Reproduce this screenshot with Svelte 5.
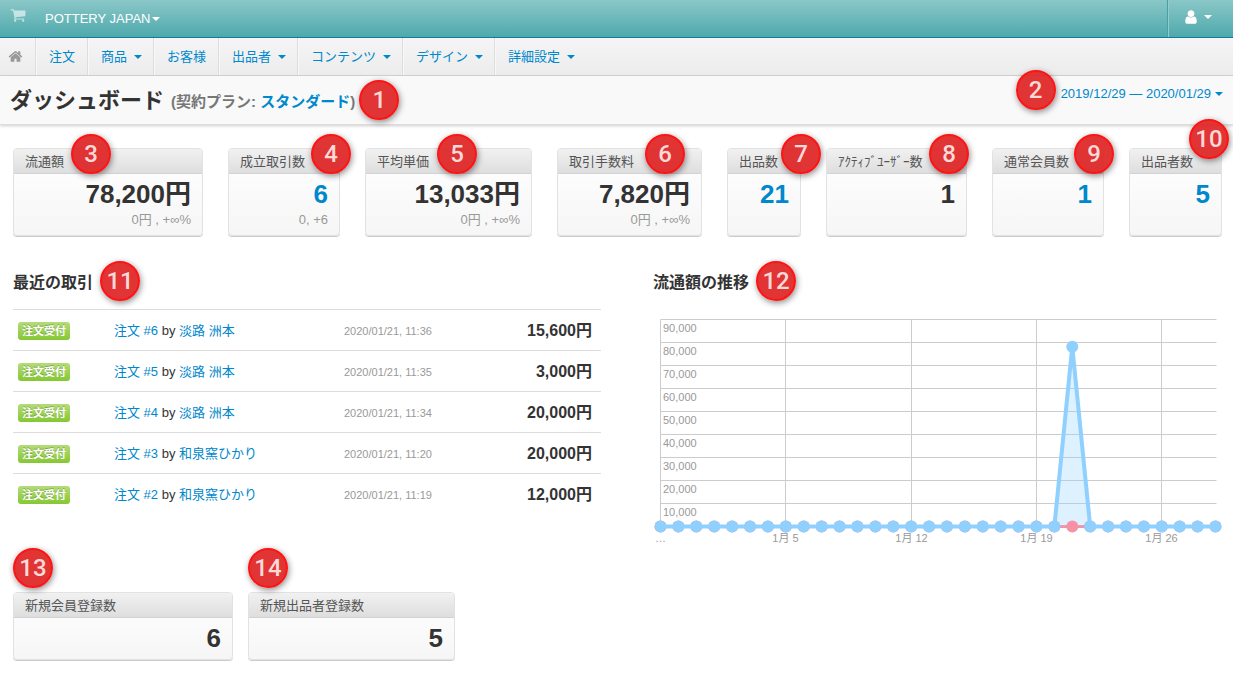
<script>
  const menu = [
    { label: '注文' },
    { label: '商品', caret: true },
    { label: 'お客様' },
    { label: '出品者', caret: true },
    { label: 'コンテンツ', caret: true },
    { label: 'デザイン', caret: true },
    { label: '詳細設定', caret: true }
  ];

  // x is the marker offset from the left edge of the card
  const stats = [
    { label: '流通額', value: '78,200円', sub: '0円 , +∞%', marker: 3, x: 57 },
    { label: '成立取引数', value: '6', sub: '0, +6', link: true, marker: 4, x: 82 },
    { label: '平均単価', value: '13,033円', sub: '0円 , +∞%', marker: 5, x: 71 },
    { label: '取引手数料', value: '7,820円', sub: '0円 , +∞%', marker: 6, x: 87 },
    { label: '出品数', value: '21', link: true, marker: 7, x: 53 },
    { label: 'ｱｸﾃｨﾌﾞﾕｰｻﾞｰ数', value: '1', marker: 8, x: 102 },
    { label: '通常会員数', value: '1', link: true, marker: 9, x: 81 },
    { label: '出品者数', value: '5', link: true, marker: 10, x: 59, raised: true }
  ];

  const signups = [
    { label: '新規会員登録数', value: '6', marker: 13 },
    { label: '新規出品者登録数', value: '5', marker: 14 }
  ];

  const orders = [
    { id: 6, customer: '淡路 洲本', date: '2020/01/21, 11:36', total: '15,600円' },
    { id: 5, customer: '淡路 洲本', date: '2020/01/21, 11:35', total: '3,000円' },
    { id: 4, customer: '淡路 洲本', date: '2020/01/21, 11:34', total: '20,000円' },
    { id: 3, customer: '和泉窯ひかり', date: '2020/01/21, 11:20', total: '20,000円' },
    { id: 2, customer: '和泉窯ひかり', date: '2020/01/21, 11:19', total: '12,000円' }
  ];

  // Chart geometry
  const left = 7.5;
  const right = 562.5;
  const top = 9.5;
  const bottom = 216.5;
  const days = 32;
  const peakDay = 23;

  const sales = Array.from({ length: days }, (_, i) => (i === peakDay ? 78200 : 0));
  const points = sales.map((amount, i) => ({
    x: left + ((right - left) * i) / (days - 1),
    y: bottom - ((bottom - top) * amount) / 90000
  }));
  const line = points.map((p) => `${p.x},${p.y}`).join(' ');

  const yTicks = [90, 80, 70, 60, 50, 40, 30, 20, 10].map((n, i) => ({
    label: `${n},000`,
    y: top + i * 23
  }));
  const xTicks = [
    { day: 0, label: '…' },
    { day: 7, label: '1月 5' },
    { day: 14, label: '1月 12' },
    { day: 21, label: '1月 19' },
    { day: 28, label: '1月 26' }
  ].map((t) => ({ ...t, x: Math.floor(points[t.day].x) + 0.5 }));
</script>

{#snippet card(stat)}
  <h3>{stat.label}</h3>
  <div class="card-body">
    {#if stat.link}
      <a class="value" href="#detail">{stat.value}</a>
    {:else}
      <span class="value">{stat.value}</span>
    {/if}
    {#if stat.sub}
      <span class="sub">{stat.sub}</span>
    {/if}
  </div>
{/snippet}

<header class="topbar">
  <a class="cart" href="#store" aria-label="ストア">
    <svg viewBox="0 0 1792 1792" width="16" height="16"><path d="M704 1536q0 52-38 90t-90 38-90-38-38-90 38-90 90-38 90 38 38 90zm896 0q0 52-38 90t-90 38-90-38-38-90 38-90 90-38 90 38 38 90zm128-1088v512q0 24-16.5 42.5t-40.5 21.5l-1044 122q13 60 13 70 0 16-24 64h920q26 0 45 19t19 45-19 45-45 19h-1024q-26 0-45-19t-19-45q0-11 8-31.5t16-36 21.5-40 15.5-29.5l-177-823h-204q-26 0-45-19t-19-45 19-45 45-19h256q16 0 28.5 6.5t19.5 15.5 13 24.5 8 26 5.5 29.5 4.5 26h1201q26 0 45 19t19 45z" /></svg>
  </a>
  <button class="store">POTTERY JAPAN<span class="caret"></span></button>
  <button class="account" aria-label="アカウント">
    <svg viewBox="0 0 1792 1792" width="16" height="16"><path d="M1536 1399q0 109-62.5 187t-150.5 78h-854q-88 0-150.5-78t-62.5-187q0-85 8.5-160.5t31.5-152 58.5-131 94-89 134.5-34.5q131 128 313 128t313-128q76 0 134.5 34.5t94 89 58.5 131 31.5 152 8.5 160.5zm-256-887q0 159-112.5 271.5t-271.5 112.5-271.5-112.5-112.5-271.5 112.5-271.5 271.5-112.5 271.5 112.5 112.5 271.5z" /></svg>
    <span class="caret"></span>
  </button>
</header>

<nav class="menu">
  <a class="home" href="#home" aria-label="ホーム">
    <svg viewBox="0 0 1792 1792" width="15" height="15"><path d="M1472 992v480q0 26-19 45t-45 19h-384v-384h-256v384h-384q-26 0-45-19t-19-45v-480q0-1 .5-3t.5-3l575-474 575 474q1 2 1 6zm223-69l-62 74q-8 9-21 11h-3q-13 0-21-7l-692-577-692 577q-12 8-24 7-13-2-21-11l-62-74q-8-10-7-23.5t11-21.5l719-599q32-26 76-26t76 26l244 204v-195q0-14 9-23t23-9h192q14 0 23 9t9 23v408l219 182q10 8 11 21.5t-7 23.5z" /></svg>
  </a>
  {#each menu as item}
    <a class:dropdown={item.caret} href="#menu">{item.label}{#if item.caret}<span class="caret"></span>{/if}</a>
  {/each}
</nav>

<div class="titlebar">
  <h1>ダッシュボード</h1>
  <p class="plan">(契約プラン: <a href="#plan">スタンダード</a>)</p>
  <span class="marker">1</span>
  <div class="period">
    <span class="marker">2</span>
    <button class="range">2019/12/29 — 2020/01/29<span class="caret"></span></button>
  </div>
</div>

<main>
  <section class="stats">
    {#each stats as stat}
      <article class="card">
        {@render card(stat)}
        <span class="marker pinned" class:raised={stat.raised} style="left: {stat.x}px">{stat.marker}</span>
      </article>
    {/each}
  </section>

  <div class="columns">
    <section>
      <header class="section-head">
        <h2>最近の取引</h2>
        <span class="marker">11</span>
      </header>
      <table class="orders">
        <tbody>
          {#each orders as order}
            <tr>
              <td class="status"><span class="tag">注文受付</span></td>
              <td class="order"><a href="#order">注文 #{order.id}</a> by <a href="#customer">{order.customer}</a></td>
              <td class="date">{order.date}</td>
              <td class="total">{order.total}</td>
            </tr>
          {/each}
        </tbody>
      </table>
    </section>

    <section>
      <header class="section-head">
        <h2>流通額の推移</h2>
        <span class="marker">12</span>
      </header>
      <svg class="chart" viewBox="0 0 569 240" role="img" aria-label="流通額の推移">
        <g class="grid">
          {#each yTicks as tick}
            <line x1={left} y1={tick.y} x2={right + 1} y2={tick.y} />
          {/each}
          {#each xTicks as tick}
            <line x1={tick.x} y1={top} x2={tick.x} y2={bottom} />
          {/each}
        </g>
        <line class="previous" x1={left} y1={bottom} x2={right} y2={bottom} />
        <polygon class="area" points="{line} {right},{bottom} {left},{bottom}" />
        {#each points as p}
          <circle class="previous-dot" cx={p.x} cy={bottom} r="6" />
        {/each}
        <polyline class="current" points={line} />
        {#each points as p}
          <circle class="dot" cx={p.x} cy={p.y} r="6" />
        {/each}
        {#each yTicks as tick}
          <text x="10" y={tick.y + 12}>{tick.label}</text>
        {/each}
        {#each xTicks as tick}
          <text x={tick.x} y="232" text-anchor="middle">{tick.label}</text>
        {/each}
      </svg>
    </section>
  </div>

  <section class="signups">
    {#each signups as stat}
      <article class="card">
        {@render card(stat)}
        <span class="marker pinned above">{stat.marker}</span>
      </article>
    {/each}
  </section>
</main>

<style>
  :global(body) {
    background: #fff;
    color: #333;
    font-family: "Liberation Sans", "Noto Sans CJK JP", sans-serif;
    font-size: 13px;
    line-height: 20px;
  }

  h1,
  h2,
  h3,
  p {
    margin: 0;
  }

  a {
    color: #08c;
    text-decoration: none;
  }

  button {
    display: flex;
    align-items: center;
    padding: 0;
    border: 0;
    background: none;
    color: inherit;
    font: inherit;
    cursor: pointer;
  }

  svg {
    display: block;
    fill: currentColor;
  }

  .caret {
    display: inline-block;
    border-top: 4px solid currentColor;
    border-left: 4px solid transparent;
    border-right: 4px solid transparent;
  }

  /* Top bar */
  .topbar {
    display: flex;
    height: 37px;
    border-bottom: 1px solid #0a7c9e;
    background: linear-gradient(#8ac7c8, #4fa9ac);
    color: #fff;
    text-shadow: 0 -1px 0 rgba(0, 0, 0, 0.25);
  }

  .cart {
    padding: 7px 19px 0 10px;
    color: rgba(255, 255, 255, 0.6);
  }

  .store {
    gap: 2px;
  }

  .account {
    gap: 5px;
    margin-left: auto;
    padding: 0 21px 3px 15px;
    border-left: 1px solid #4a9fa5;
    box-shadow: inset 1px 0 0 #93cccf;
  }

  /* Navigation */
  .menu {
    display: flex;
    height: 37px;
    border-bottom: 1px solid #d6d6d6;
    background: linear-gradient(#f5f5f5, #ececec);
  }

  .menu a {
    display: flex;
    align-items: center;
    gap: 7px;
    padding: 0 12px;
    border-left: 1px solid #f8f8f8;
    border-right: 1px solid #ddd;
  }

  .menu .dropdown {
    padding-right: 11px;
  }

  .menu a:last-child {
    border-right: 0;
  }

  .menu .home {
    padding: 0 12px 0 8px;
    border-left: 0;
    color: #999;
  }

  /* Title */
  .titlebar {
    display: flex;
    align-items: center;
    height: 48px;
    padding: 0 10px;
    border-bottom: 1px solid #ddd;
    background: #f9f9f9;
    box-shadow: 0 1px 3px rgba(0, 0, 0, 0.2);
  }

  h1 {
    padding-top: 2px;
    font-size: 22px;
    line-height: 30px;
  }

  .plan {
    margin: 0 4px 0 7px;
    padding-top: 4px;
    color: #777;
    font-size: 15px;
    font-weight: bold;
  }

  .period {
    display: flex;
    align-items: center;
    gap: 5px;
    margin: 0 0 20px auto;
  }

  .range {
    gap: 4px;
    padding-top: 7px;
    color: #08c;
  }

  /* Numbered markers */
  .marker {
    box-sizing: border-box;
    width: 40px;
    height: 40px;
    border: 2px solid #fd1414;
    border-radius: 50%;
    background: rgba(222, 35, 35, 0.92);
    box-shadow: 1px 2px 6px rgba(0, 0, 0, 0.45);
    color: #fbd9d9;
    font-family: Roboto, "Liberation Sans", sans-serif;
    font-size: 24px;
    font-weight: 500;
    line-height: 36px;
    text-align: center;
  }

  .pinned {
    position: absolute;
    top: -15px;
  }

  .raised {
    top: -30px;
  }

  .above {
    top: -45px;
    left: -1px;
  }

  main {
    padding: 23px 11px 20px 13px;
  }

  /* Cards */
  .stats {
    display: grid;
    grid-template-columns: 190fr 112fr 167fr 145fr 74fr 141fr 112fr 93fr;
    gap: 25px;
  }

  .signups {
    display: grid;
    grid-template-columns: 220fr 207fr;
    gap: 15px;
    max-width: 442px;
    margin-top: 42px;
  }

  .card {
    position: relative;
    display: flex;
    flex-direction: column;
    min-width: 0;
    border: 1px solid #e2e2e2;
    border-radius: 4px;
    background: linear-gradient(#fff, #f6f6f6);
    box-shadow: 0 1px 0 #ccc;
  }

  .card h3 {
    padding: 3px 11px 1px;
    border-bottom: 1px solid #d2d2d2;
    border-radius: 3px 3px 0 0;
    background: linear-gradient(#f1f1f1, #dedede);
    color: #555;
    font-size: 13px;
    font-weight: normal;
    white-space: nowrap;
  }

  .card-body {
    display: flex;
    flex-direction: column;
    padding: 5px 11px;
    text-align: right;
  }

  .value {
    font-size: 26px;
    font-weight: bold;
    line-height: 31px;
    white-space: nowrap;
  }

  .sub {
    color: #999;
    white-space: nowrap;
  }

  /* Lower columns */
  .columns {
    display: grid;
    grid-template-columns: 588fr 569fr;
    gap: 52px;
    margin-top: 25px;
  }

  .section-head {
    display: flex;
    align-items: center;
    gap: 7px;
    margin-bottom: 8px;
  }

  h2 {
    padding-top: 4px;
    font-size: 16px;
    line-height: 24px;
  }

  .orders {
    width: 100%;
    border-spacing: 0;
    table-layout: fixed;
  }

  .orders td {
    height: 38px;
    padding: 2px 5px 0;
    border-top: 1px solid #ddd;
  }

  .status {
    width: 86px;
  }

  .order {
    width: 220px;
  }

  .tag {
    display: inline-block;
    padding: 0 4px;
    border-radius: 3px;
    background: linear-gradient(#b4dc78, #84c832);
    color: #fff;
    font-size: 11px;
    font-weight: bold;
    line-height: 18px;
    text-shadow: 0 -1px 0 rgba(0, 0, 0, 0.25);
  }

  .date {
    color: #999;
    font-size: 11px;
  }

  .orders .total {
    padding-right: 9px;
    font-size: 16px;
    font-weight: bold;
    text-align: right;
  }

  /* Chart */
  .chart {
    width: 100%;
    margin-top: 9px;
  }

  .chart text {
    fill: #999;
    font-size: 11px;
  }

  .grid line {
    stroke: #ccc;
  }

  .previous {
    stroke: #f691a6;
    stroke-width: 3;
  }

  .previous-dot {
    fill: #f691a6;
  }

  .area {
    fill: rgba(143, 208, 255, 0.3);
  }

  .current {
    fill: none;
    stroke: #8fd0ff;
    stroke-width: 4;
    stroke-linejoin: round;
  }

  .dot {
    fill: #8fd0ff;
  }
</style>
